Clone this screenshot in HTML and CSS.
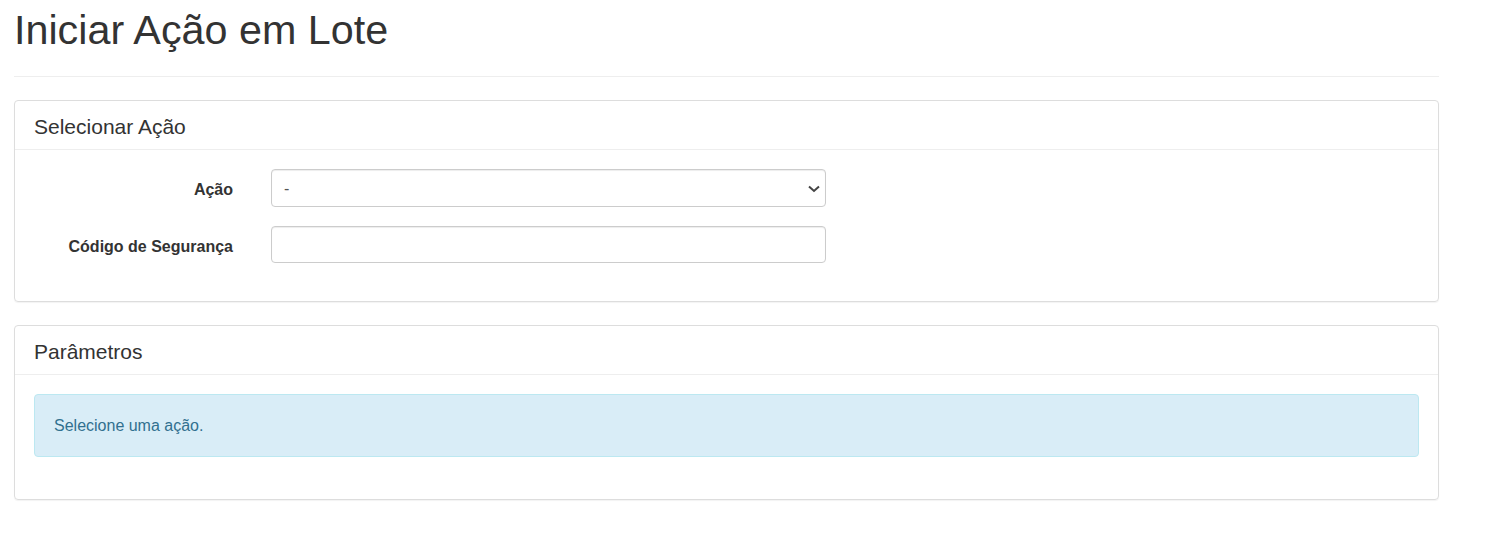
FILE: index.html
```html
<!DOCTYPE html>
<html lang="pt-BR">
<head>
  <meta charset="UTF-8">
  <meta name="viewport" content="width=device-width, initial-scale=1.0">
  <title>Iniciar Ação em Lote</title>
  <link rel="stylesheet" href="styles.css">
</head>
<body>
  <div class="page">
    <div class="page-header">
      <h1>Iniciar Ação em Lote</h1>
    </div>

    <!-- Selecionar ação -->
    <div class="panel">
      <div class="panel-heading">Selecionar Ação</div>
      <div class="panel-body">
        <form class="form-horizontal">
          <label for="acao">Ação</label>
          <div class="select-wrap">
            <select id="acao" class="form-control">
              <option value="">-</option>
            </select>
            <svg class="chevron" width="12" height="8" viewBox="0 0 12 8">
              <path d="M1 1.5 L6 6 L11 1.5" fill="none" stroke="#444" stroke-width="2"/>
            </svg>
          </div>

          <label for="codigo">Código de Segurança</label>
          <input type="text" id="codigo" class="form-control input-text">
        </form>
      </div>
    </div>

    <!-- Parâmetros -->
    <div class="panel">
      <div class="panel-heading">Parâmetros</div>
      <div class="panel-body">
        <div class="alert-info">Selecione uma ação.</div>
      </div>
    </div>
  </div>
</body>
</html>
```

FILE: styles.css
```css
body {
  font-family: 'Liberation Sans', Arial, sans-serif;
  font-size: 16px;
  color: #333;
  background-color: #fff;
  margin: 0;
  padding: 0;
}

.page {
  width: 1425px;
  margin-left: 14px;
}

.page-header {
  padding-top: 8px;
  padding-bottom: 23px;
  border-bottom: 1px solid #eee;
  margin-bottom: 23px;
}

h1 {
  font-size: 41.3px;
  font-weight: normal;
  line-height: 1.1;
  margin: 0;
}

.panel {
  border: 1px solid #ddd;
  border-radius: 4px;
  box-shadow: 0 1px 1px rgba(0, 0, 0, 0.05);
  margin-bottom: 23px;
}

.panel-heading {
  font-size: 21px;
  line-height: 23px;
  padding: 14px 19px 11px;
  border-bottom: 1px solid #eee;
}

.panel-body {
  padding: 19px 19px 0;
}

.form-horizontal {
  display: grid;
  grid-template-columns: 199px 555px;
  column-gap: 38px;
  row-gap: 19px;
  align-items: center;
  padding-bottom: 38px;
}

label {
  font-weight: bold;
  text-align: right;
  padding-top: 4px;
}

.select-wrap {
  position: relative;
}

.form-control {
  box-sizing: border-box;
  display: block;
  width: 100%;
  height: 38px;
  padding: 6px 12px;
  font-family: inherit;
  font-size: 16px;
  color: #555;
  background-color: #fff;
  border: 1px solid #ccc;
  border-radius: 4px;
  box-shadow: inset 0 1px 1px rgba(0, 0, 0, 0.075);
}

select.form-control {
  appearance: none;
  -webkit-appearance: none;
}

.chevron {
  position: absolute;
  right: 6px;
  top: 16px;
  pointer-events: none;
}

.input-text {
  height: 37px;
}

.alert-info {
  background-color: #d9edf7;
  border: 1px solid #bce8f1;
  border-radius: 4px;
  color: #31708f;
  padding: 21px 19px;
  line-height: 19px;
  margin-bottom: 42px;
}
```
